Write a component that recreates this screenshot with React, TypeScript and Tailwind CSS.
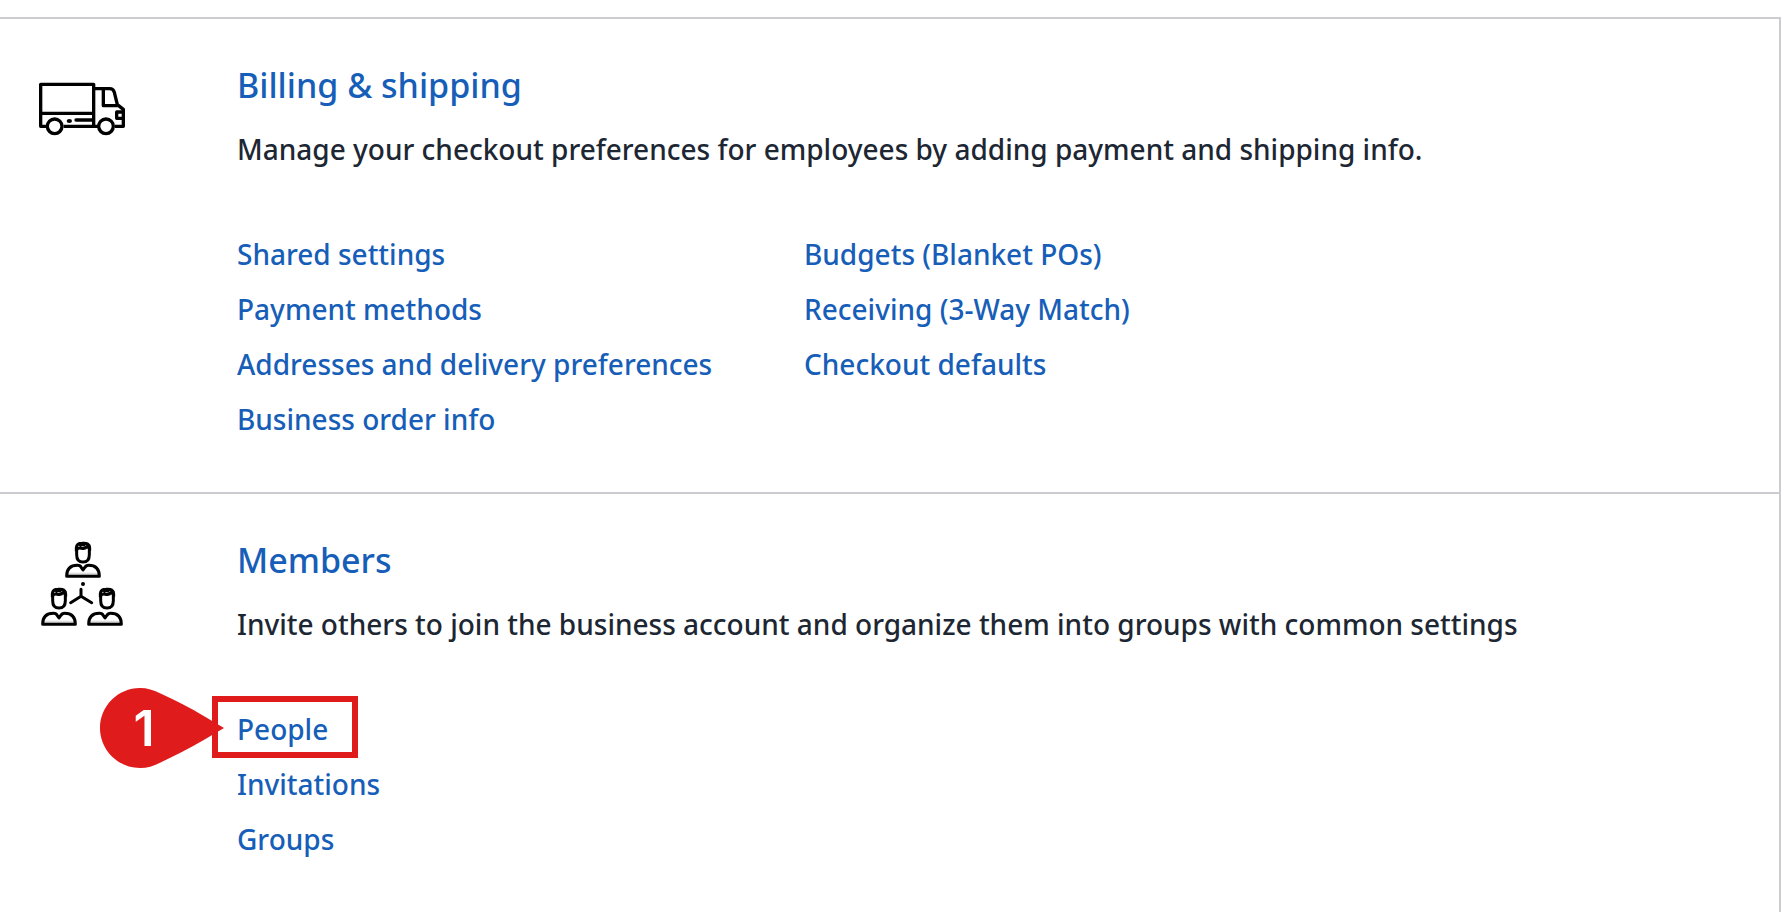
import type { ReactNode } from "react";

interface SectionProps {
  title: string;
  description: string;
  icon: ReactNode;
  /** One entry per column of links. */
  columns: string[][];
  /** Step markers, keyed by link label. */
  steps?: Record<string, number>;
}

function TruckIcon() {
  return (
    <svg viewBox="54 12 264 264" className="size-22" fill="none" stroke="#000" strokeWidth="10" strokeLinejoin="round" aria-hidden="true">
      <path d="M80 199H62V73H221V199H131M62 160H221M221 199H234" />
      <path d="M225 86H269Q280 86 283 97L292 134L310 148V199H285" />
      <path d="M250 86V137H293" />
      <path d="M310 156H290V175H310" />
      <path d="M168 180H219" strokeLinecap="round" />
      <ellipse cx="148" cy="183" rx="8" ry="6" fill="#000" stroke="none" />
      <circle cx="104" cy="199" r="22" />
      <circle cx="258" cy="199" r="22" />
    </svg>
  );
}

interface PersonProps {
  x: number;
  y: number;
  /** Shift of the shoulders relative to the head. */
  dx?: number;
  dy?: number;
}

function Person({ x, y, dx = 0, dy = 0 }: PersonProps) {
  return (
    <g transform={`translate(${x} ${y})`}>
      <path d="M-19 20V38Q-19 60 0 60Q19 60 19 38V20" />
      <path d="M-20 28V17Q-19 4-3 4Q20 1 20 18V26M-20 25Q-15 16-5 19Q7 22 12 13L20 20" />
      <path d="M-11 12Q-2 6 7 10" />
      <g transform={`translate(${dx} ${dy})`}>
        <path d="M-44 92H44V101H-44Z" fill="#ddd" stroke="none" />
        <path d="M-49 103Q-49 70-17 70Q-8 70-5 77L0 84L5 77Q9 70 17 70Q49 70 49 103Z" />
      </g>
    </g>
  );
}

function MembersIcon() {
  return (
    <svg viewBox="54 42 264 264" className="size-22" fill="none" stroke="#000" strokeWidth="9" strokeLinejoin="round" aria-hidden="true">
      <Person x={189} y={51} />
      <Person x={117} y={189} dy={6} />
      <Person x={261} y={189} dx={-6} dy={6} />
      <circle cx="189" cy="177" r="6" fill="#000" stroke="none" />
      <path d="M183 193V214L152 233M183 214L215 233" strokeLinecap="round" />
    </svg>
  );
}

function StepMarker({ step }: { step: number }) {
  return (
    <>
      <span className="pointer-events-none absolute -top-1.5 -left-[25px] h-[62px] w-[146px] border-6 border-[#e01b1c]" />
      <span className="pointer-events-none absolute -top-3.5 -left-[137px] h-20 w-31">
        <svg viewBox="0 0 372 240" className="size-full" fill="#e01b1c" aria-hidden="true">
          <path d="M120 0C54 0 0 54 0 120S54 240 120 240C142 240 160 234 180 224Q250 192 310 157L372 120L310 83Q250 48 180 16C160 6 142 0 120 0Z" />
        </svg>
        <span className="absolute inset-y-0 left-0 flex w-22 items-center justify-center font-[Inter,sans-serif] text-[50px] font-semibold text-white">
          {step}
        </span>
      </span>
    </>
  );
}

function Section({ title, description, icon, columns, steps = {} }: SectionProps) {
  return (
    <section className="flex py-11">
      <div className="w-[237px] shrink-0 pl-[38px] pt-px">{icon}</div>
      <div className="min-w-0 flex-1">
        <h2 className="text-[34px] leading-[44px] font-medium text-[#165eb8]">
          <a href="#" className="hover:underline">{title}</a>
        </h2>
        <p className="mt-[22px] text-[28px] leading-10 font-medium text-[#1d2733]">{description}</p>
        <div className="mt-[58px] mb-px flex">
          {columns.map((links) => (
            <ul key={links[0]} className="w-[567px]">
              {links.map((label) => (
                <li key={label} className="relative text-[28px] leading-[55px] font-medium text-[#165eb8]">
                  <a href="#" className="hover:underline">{label}</a>
                  {steps[label] && <StepMarker step={steps[label]} />}
                </li>
              ))}
            </ul>
          ))}
        </div>
      </div>
    </section>
  );
}

export default function App() {
  return (
    <div className="min-h-screen overflow-hidden bg-white pt-[17px] pr-[7px] font-['Noto_Sans',sans-serif]">
      <main className="min-h-screen divide-y-2 divide-[#cbcbd0] border-t-2 border-r-2 border-[#cbcbd0]">
        <Section
          title="Billing & shipping"
          description="Manage your checkout preferences for employees by adding payment and shipping info."
          icon={<TruckIcon />}
          columns={[
            ["Shared settings", "Payment methods", "Addresses and delivery preferences", "Business order info"],
            ["Budgets (Blanket POs)", "Receiving (3-Way Match)", "Checkout defaults"],
          ]}
        />
        <Section
          title="Members"
          description="Invite others to join the business account and organize them into groups with common settings"
          icon={<MembersIcon />}
          columns={[["People", "Invitations", "Groups"]]}
          steps={{ People: 1 }}
        />
      </main>
    </div>
  );
}
